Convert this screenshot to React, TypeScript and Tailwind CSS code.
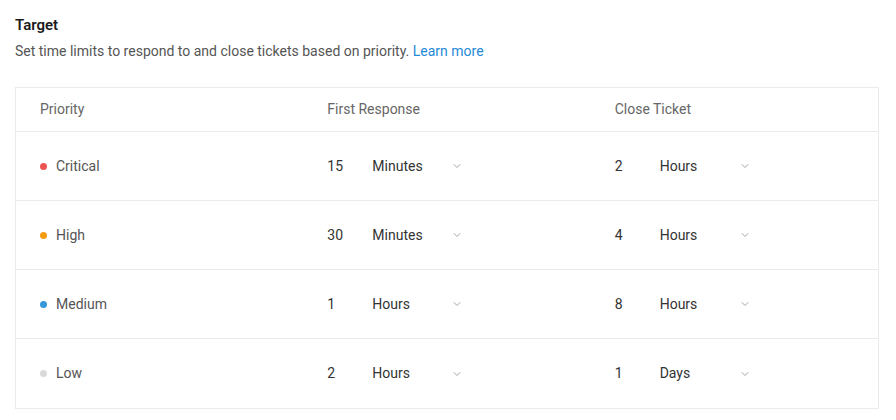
import { ChevronDown } from 'lucide-react'

type Row = {
  label: string
  dot: string
  first: [string, string]
  close: [string, string]
}

const rows: Row[] = [
  { label: 'Critical', dot: 'bg-[#ec5353]', first: ['15', 'Minutes'], close: ['2', 'Hours'] },
  { label: 'High', dot: 'bg-[#f39c12]', first: ['30', 'Minutes'], close: ['4', 'Hours'] },
  { label: 'Medium', dot: 'bg-[#3498db]', first: ['1', 'Hours'], close: ['8', 'Hours'] },
  { label: 'Low', dot: 'bg-[#d9d9d9]', first: ['2', 'Hours'], close: ['1', 'Days'] },
]

function TimeField({ value, unit }: { value: string; unit: string }) {
  return (
    <div className="flex items-center pl-6 text-[14px] text-[#333]">
      <span className="w-[45px]">{value}</span>
      <span className="w-[79px]">{unit}</span>
      <ChevronDown className="h-3 w-3 text-[#888]" strokeWidth={1.5} />
    </div>
  )
}

export default function App() {
  return (
    <div className="min-h-[420px] bg-white px-[15px] pt-[15px] font-['Roboto',sans-serif]">
      <h2 className="text-[15px] font-semibold leading-5 text-[#1a1a1a]">Target</h2>
      <p className="mt-[6px] text-[14px] leading-5 text-[#555]">
        Set time limits to respond to and close tickets based on priority.{' '}
        <a className="text-[#1f8ad6]" href="#">
          Learn more
        </a>
      </p>

      <div className="mt-[26px] w-[864px] border border-[#ebebeb]">
        <div className="grid h-[44px] grid-cols-3 items-center border-b border-[#ebebeb] text-[14px] text-[#666]">
          <div className="pl-6">Priority</div>
          <div className="pl-6">First Response</div>
          <div className="pl-6">Close Ticket</div>
        </div>
        {rows.map((row, i) => (
          <div
            key={row.label}
            className={`grid h-[69px] grid-cols-3 items-center ${i < rows.length - 1 ? 'border-b border-[#ebebeb]' : ''}`}
          >
            <div className="flex items-center pl-6 text-[14px] text-[#555]">
              <span className={`h-[7px] w-[7px] rounded-full ${row.dot}`} />
              <span className="ml-[9px]">{row.label}</span>
            </div>
            <TimeField value={row.first[0]} unit={row.first[1]} />
            <TimeField value={row.close[0]} unit={row.close[1]} />
          </div>
        ))}
      </div>
    </div>
  )
}
